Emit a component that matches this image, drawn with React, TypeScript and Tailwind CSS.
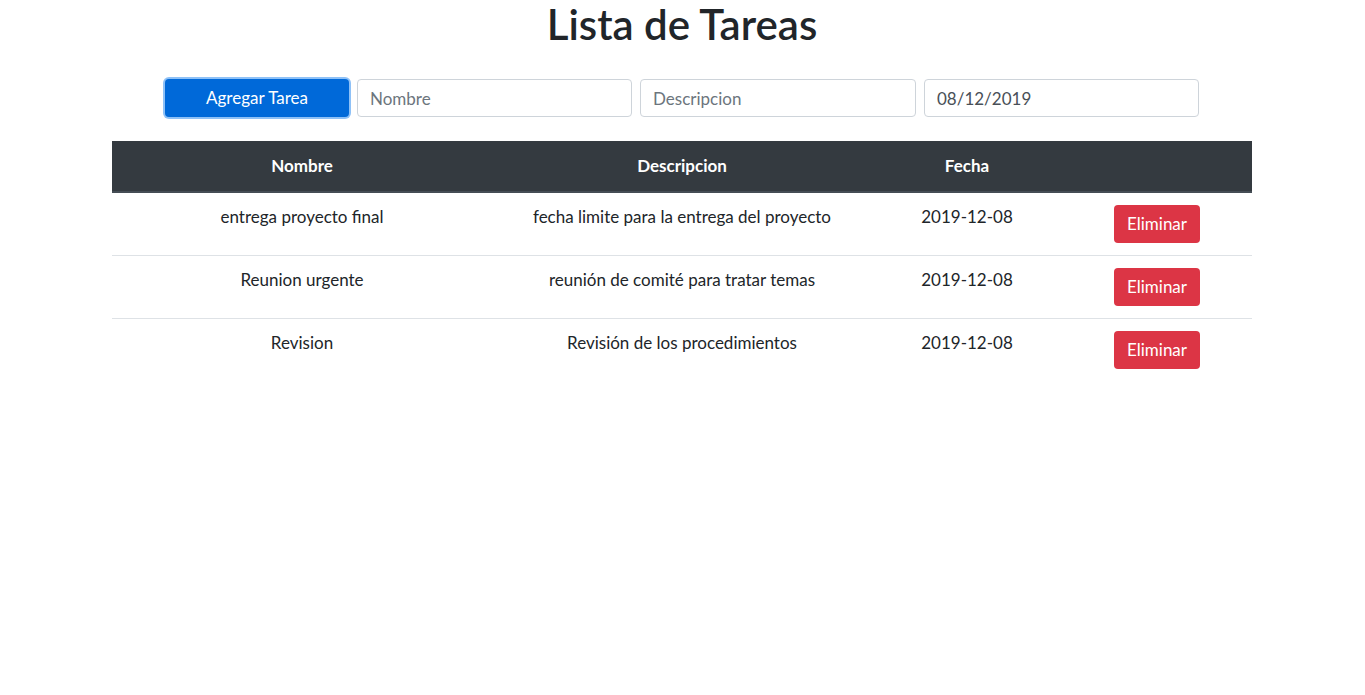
const tareas = [
  { nombre: "entrega proyecto final", descripcion: "fecha limite para la entrega del proyecto", fecha: "2019-12-08" },
  { nombre: "Reunion urgente", descripcion: "reunión de comité para tratar temas", fecha: "2019-12-08" },
  { nombre: "Revision", descripcion: "Revisión de los procedimientos", fecha: "2019-12-08" },
];

const inputClass =
  "h-[38px] px-3 border border-[#ced4da] rounded-[4px] text-[17px] text-[#495057] placeholder:text-[#6c757d] outline-none";

export default function App() {
  return (
    <main className="w-full min-h-screen pr-px bg-white text-[#212529] font-['Lato','Noto_Sans',sans-serif]">
      <div className="w-[1140px] mx-auto">
        <h1 className="text-center text-[42px] leading-[48px] font-semibold">Lista de Tareas</h1>

        <form className="flex justify-center gap-2 mt-[31px]" onSubmit={(e) => e.preventDefault()}>
          <button
            type="submit"
            className="w-[184px] h-[38px] bg-[#0069d9] text-white rounded-[4px] ring-2 ring-[#8ec1f7] text-[17px]"
          >
            Agregar Tarea
          </button>
          <input className={`w-[275px] ${inputClass}`} placeholder="Nombre" />
          <input className={`w-[276px] ${inputClass}`} placeholder="Descripcion" />
          <input className={`w-[275px] ${inputClass}`} defaultValue="08/12/2019" />
        </form>

        <table className="w-full mt-6 text-center text-[17px] border-collapse">
          <thead>
            <tr className="bg-[#343a40] text-white">
              <th className="w-[380px] py-3 leading-[26px] font-bold border-b-2 border-[#454d55]">Nombre</th>
              <th className="w-[380px] py-3 leading-[26px] font-bold border-b-2 border-[#454d55]">Descripcion</th>
              <th className="w-[190px] py-3 leading-[26px] font-bold border-b-2 border-[#454d55]">Fecha</th>
              <th className="w-[190px] py-3 border-b-2 border-[#454d55]"></th>
            </tr>
          </thead>
          <tbody>
            {tareas.map((t, i) => (
              <tr key={i} className="border-t border-[#dee2e6]">
                <td className="p-3 align-top leading-6">{t.nombre}</td>
                <td className="p-3 align-top leading-6">{t.descripcion}</td>
                <td className="p-3 align-top leading-6">{t.fecha}</td>
                <td className="p-3 align-top">
                  <button className="w-[86px] h-[38px] bg-[#dc3545] text-white rounded-[4px] text-[17px]">
                    Eliminar
                  </button>
                </td>
              </tr>
            ))}
          </tbody>
        </table>
      </div>
    </main>
  );
}
